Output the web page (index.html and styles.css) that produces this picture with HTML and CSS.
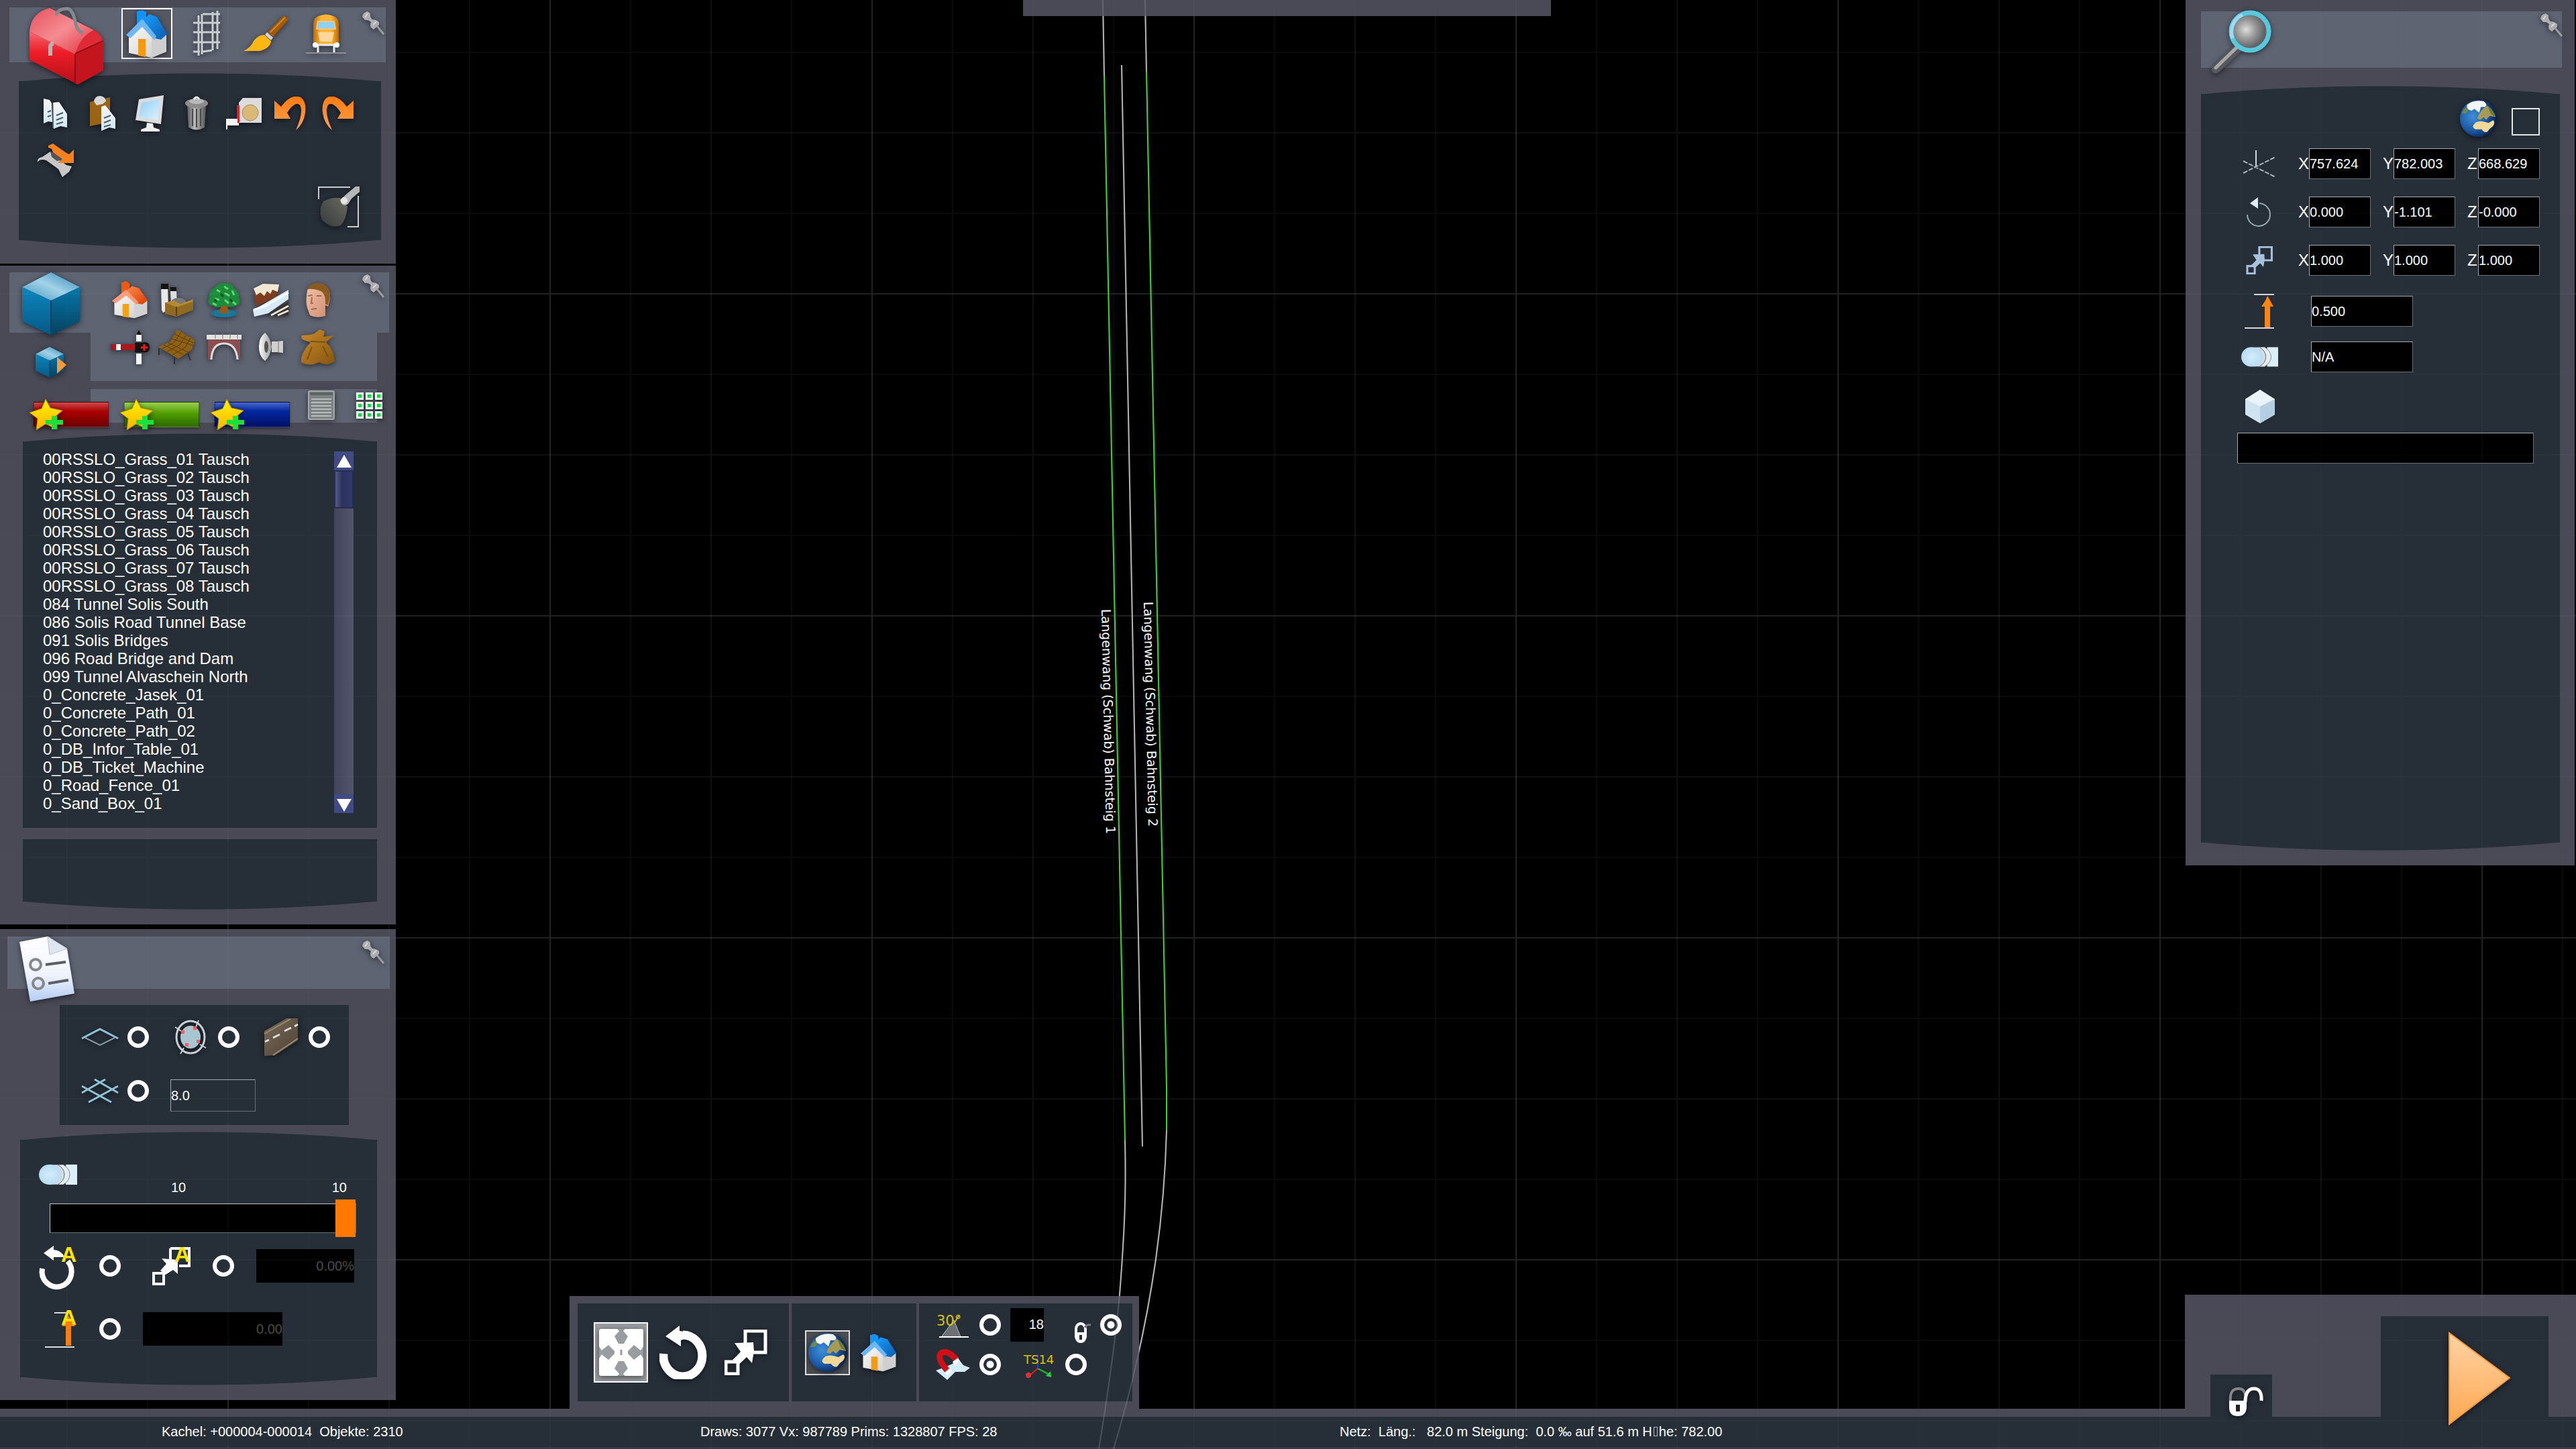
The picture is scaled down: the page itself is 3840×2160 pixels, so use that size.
FILE: index.html
```html
<!DOCTYPE html>
<html lang="de">
<head>
<meta charset="utf-8">
<title>Streckeneditor</title>
<link rel="stylesheet" href="styles.css">
</head>
<body>

<svg class="defs" aria-hidden="true">
  <defs>
    <linearGradient id="g-red" x1="0" y1="0" x2="0" y2="1"><stop offset="0" stop-color="#f26a74"/><stop offset=".4" stop-color="#ee1c27"/><stop offset="1" stop-color="#b5121b"/></linearGradient>
    <linearGradient id="g-lid" x1="0" y1="0" x2="1" y2="1"><stop offset="0" stop-color="#e8505c"/><stop offset=".5" stop-color="#f58c92"/><stop offset="1" stop-color="#e0303c"/></linearGradient>
    <linearGradient id="g-blue-roof" x1="0" y1="0" x2="1" y2="1"><stop offset="0" stop-color="#1aa0ff"/><stop offset="1" stop-color="#0a5bae"/></linearGradient>
    <linearGradient id="g-red-roof" x1="0" y1="0" x2="1" y2="1"><stop offset="0" stop-color="#ff8a50"/><stop offset="1" stop-color="#d83c00"/></linearGradient>
    <linearGradient id="g-wall" x1="0" y1="0" x2="1" y2="1"><stop offset="0" stop-color="#fff"/><stop offset="1" stop-color="#c9c9c9"/></linearGradient>
    <linearGradient id="g-cube-top" x1="0" y1="1" x2="1" y2="0"><stop offset="0" stop-color="#3e94bd"/><stop offset=".5" stop-color="#a3d2e8"/><stop offset="1" stop-color="#2a84b4"/></linearGradient>
    <linearGradient id="g-cube-left" x1="0" y1="0" x2="0" y2="1"><stop offset="0" stop-color="#0b86bd"/><stop offset="1" stop-color="#065a86"/></linearGradient>
    <linearGradient id="g-cube-right" x1="0" y1="0" x2="0" y2="1"><stop offset="0" stop-color="#0777ab"/><stop offset="1" stop-color="#05425f"/></linearGradient>
    <linearGradient id="g-orange" x1="0" y1="0" x2="0" y2="1"><stop offset="0" stop-color="#ff7a10"/><stop offset="1" stop-color="#ffa050"/></linearGradient>
    <linearGradient id="g-play" x1="0" y1="0" x2="0" y2="1"><stop offset="0" stop-color="#ffd3a5"/><stop offset="1" stop-color="#ffa850"/></linearGradient>
    <linearGradient id="g-metal" x1="0" y1="0" x2="1" y2="0"><stop offset="0" stop-color="#555"/><stop offset=".4" stop-color="#bbb"/><stop offset="1" stop-color="#555"/></linearGradient>
    <linearGradient id="g-paper" x1="0" y1="0" x2="0" y2="1"><stop offset="0" stop-color="#f6f6f6"/><stop offset="1" stop-color="#cfe6f5"/></linearGradient>
    <linearGradient id="g-screen" x1="0" y1="0" x2="1" y2="1"><stop offset="0" stop-color="#8ecdf5"/><stop offset="1" stop-color="#dff2fc"/></linearGradient>
    <linearGradient id="g-doc" x1="0" y1="0" x2="0" y2="1"><stop offset="0" stop-color="#fff"/><stop offset=".6" stop-color="#eef3fc"/><stop offset="1" stop-color="#b4ccf5"/></linearGradient>
    <linearGradient id="g-star" x1="0" y1="0" x2="0" y2="1"><stop offset="0" stop-color="#fff200"/><stop offset="1" stop-color="#ffb400"/></linearGradient>
    <linearGradient id="g-train" x1="0" y1="0" x2="1" y2="0"><stop offset="0" stop-color="#b86c00"/><stop offset=".3" stop-color="#ffb53a"/><stop offset=".7" stop-color="#ffb53a"/><stop offset="1" stop-color="#b86c00"/></linearGradient>
    <linearGradient id="g-beam" x1="1" y1="0" x2="0" y2="1"><stop offset="0" stop-color="#6d6c62"/><stop offset="1" stop-color="#33383a"/></linearGradient>
    <linearGradient id="g-sack" x1="0" y1="0" x2="1" y2="1"><stop offset="0" stop-color="#c98a2c"/><stop offset="1" stop-color="#85550e"/></linearGradient>
    <linearGradient id="g-face" x1="0" y1="0" x2="1" y2="1"><stop offset="0" stop-color="#f2c4aa"/><stop offset="1" stop-color="#cf8a70"/></linearGradient>
    <linearGradient id="g-cone" x1="0" y1="0" x2="1" y2="0"><stop offset="0" stop-color="#fff"/><stop offset="1" stop-color="#999"/></linearGradient>
    <linearGradient id="g-road" x1="0" y1="0" x2="1" y2="1"><stop offset="0" stop-color="#7a6b58"/><stop offset="1" stop-color="#4c4236"/></linearGradient>
    <radialGradient id="g-lens" cx=".4" cy=".45"><stop offset="0" stop-color="#dedede"/><stop offset=".5" stop-color="#999"/><stop offset="1" stop-color="#5f6166"/></radialGradient>
    <radialGradient id="g-sea" cx=".35" cy=".45" r=".65"><stop offset="0" stop-color="#3f8fd8"/><stop offset=".6" stop-color="#1b58a4"/><stop offset="1" stop-color="#0a2145"/></radialGradient>
    <radialGradient id="g-capsule"><stop offset="0" stop-color="#d4ecfa"/><stop offset="1" stop-color="#b9dcf2"/></radialGradient>

    <pattern id="grid" x="340" y="438" width="480" height="480" patternUnits="userSpaceOnUse">
      <path d="M120 0V480M360 0V480M0 120H480M0 360H480" stroke="#fff" stroke-opacity=".03" stroke-width="2"/>
      <path d="M240 0V480M0 240H480" stroke="#fff" stroke-opacity=".05" stroke-width="2"/>
      <path d="M0 0V480M0 0H480M480 0V480M0 480H480" stroke="#fff" stroke-opacity=".11" stroke-width="2"/>
    </pattern>

    <g id="terrain">
      <rect width="100%" height="100%" fill="url(#grid)"/>
      <g fill="none" stroke-width="2">
        <path d="M1644 0L1646 113M1707 0L1709 107M1672 97L1703 1709M1677 1700C1679 1780 1676 1840 1669 1930C1662 2005 1652 2075 1638 2160M1739 1685C1737 1760 1731 1820 1723 1877C1711 1960 1690 2060 1660 2160" stroke="#b4b4b4"/>
        <path d="M1646 113L1677 1700M1709 107L1739 1620V1685" stroke="#3bd42a"/>
      </g>
    </g>

    <symbol id="pin" viewBox="0 0 36 36">
      <path d="M1 8Q2 1 9 0L13 3Q12 8 16 12Q22 12 26 16L26 20L18 27L14 24Q12 20 14 16Q10 12 5 13Z" fill="#aeaeb2"/>
      <path d="M23 22L33 34" stroke="#9a9aa0" stroke-width="3"/><path d="M5 9L9 3M17 20L22 15" stroke="#d6d6d8" stroke-width="2"/>
    </symbol>
    <symbol id="house" viewBox="0 0 62 74">
      <path d="M4 38L4 66L38 73L60 64V38L40 16L22 22Z" fill="url(#g-wall)"/>
      <path d="M38 73V44L60 38V64Z" fill="#cfcfcf"/>
      <path d="M17 8L25 4V16L17 24Z" fill="#0a86e8"/><path d="M16 4L24 2L30 5V14L22 26H16Z" fill="#1193f5"/>
      <path d="M24 20L34 8L46 12L61 38L52 46L42 44Z" fill="url(#g-blue-roof)"/>
      <path d="M0 39L24 15L45 41L42 47L24 27L6 44Z" fill="#6db8f4"/>
      <path d="M18 45L29 45V72L18 70Z" fill="#f39a10"/>
    </symbol>
    <symbol id="cube" viewBox="0 0 86 94">
      <path d="M43 0L86 22V73L43 94L0 73V22Z" fill="#054b6e"/>
      <path d="M43 0L86 22L43 42L0 22Z" fill="url(#g-cube-top)"/>
      <path d="M0 22L43 42V93L0 73Z" fill="url(#g-cube-left)"/>
      <path d="M86 22L43 42V93L86 73Z" fill="url(#g-cube-right)"/>
      <path d="M43 42V92" stroke="#033a55" stroke-width="2"/>
    </symbol>
    <symbol id="globe" viewBox="0 0 60 60">
      <circle cx="30" cy="30" r="29" fill="url(#g-sea)"/>
      <path d="M12 9Q22 0 38 3Q46 9 40 12L34 12L31 21L24 15L19 18L12 15Z" fill="#f4f6f4"/>
      <path d="M4 22Q7 13 13 13Q15 20 10 22Z" fill="#6f8a4a"/>
      <path d="M30 25Q36 14 44 10Q54 17 57 28L48 26L42 32L38 28L33 32L28 30Z" fill="#a69a56"/>
      <path d="M44 10Q54 17 57 28L50 24Z" fill="#6d7a3c"/>
      <path d="M22 41Q26 33 38 35L46 37L53 33Q57 36 53 42Q48 45 44 51Q39 53 35 47L25 47Q20 44 22 41Z" fill="#f0d79a"/>
    </symbol>
    <symbol id="capsule" viewBox="0 0 57 30">
      <path d="M40 0H57V30H40Z" fill="#dceef7"/><path d="M26 0H36Q46 6 46 15Q46 24 36 30H26Z" fill="#e4edf0" stroke="#7d8a92"/>
      <path d="M22 0H28Q38 6 38 15Q38 24 28 30H20Z" fill="#d3dce0" stroke="#5f6a72"/>
      <rect x="0" y="0" width="33" height="30" rx="15" fill="url(#g-capsule)"/>
    </symbol>
    <symbol id="resize" viewBox="0 0 64 68">
      <path d="M31 2H61V34H31Z" fill="none" stroke="currentColor" stroke-width="5"/>
      <path d="M2 48H20V66H2Z" fill="none" stroke="currentColor" stroke-width="5"/>
      <path d="M15 20L43 19L44 32L41 50L33 41Q26 48 20 53L12 45Q18 40 24 33Z" fill="currentColor"/>
    </symbol>
    <symbol id="rotate" viewBox="0 0 71 80">
      <path d="M6 42A29 31 0 1 0 35 14" fill="none" stroke="currentColor" stroke-width="13"/>
      <path d="M9 16L30 0V8L37 9V20L32 22V31Z" fill="currentColor"/>
    </symbol>
    <symbol id="undo" viewBox="0 0 50 50">
      <path d="M1 6L11 15Q26 -5 40 1Q49 7 47 24Q45 40 33 50Q42 30 41 19Q40 9 33 11Q26 14 20 24L25 33H1Z" fill="url(#g-orange)"/>
    </symbol>
    <symbol id="star-plus" viewBox="0 0 50 46">
      <path d="M24 0L31 13L49 17L36 28L39 44L24 37L10 46L12 29L0 20L18 14Z" fill="url(#g-star)" stroke="#a88400"/>
      <path d="M33 25H41V31H50V38H41V45H33V38H24V31H33Z" fill="#1fe03a"/>
    </symbol>
  </defs>
</svg>

<svg class="map" role="img" aria-label="Streckenkarte">
  <use href="#terrain"/>
  <g class="map-label">
    <text transform="translate(1642 908) rotate(88.8)">Langenwang (Schwab) Bahnsteig 1</text>
    <text transform="translate(1705 897) rotate(88.8)">Langenwang (Schwab) Bahnsteig 2</text>
  </g>
</svg>

<main class="workspace">
  <aside class="left-column">

    <section class="panel tools">
      <header class="band">
        <button class="toolbox" aria-label="Werkzeuge">
          <svg width="114" height="116" viewBox="0 0 114 116">
            <path d="M2 36L70 70L112 50V94L74 115L2 78Z" fill="#c4141d"/>
            <path d="M2 36L70 70V113L2 78Z" fill="url(#g-red)"/>
            <path d="M2 36Q4 8 32 1L98 34Q80 44 70 70Z" fill="url(#g-lid)"/>
            <path d="M70 70Q78 42 98 34Q108 38 112 52Z" fill="#e02a35"/>
            <path d="M70 70V114M70 69L112 50" stroke="#8e0b12" stroke-width="2"/>
            <path d="M42 12Q44 1 60 2Q68 6 71 26Q74 36 82 38" fill="none" stroke="#85888e" stroke-width="5"/>
            <path d="M33 72V58Q34 54 38 54" fill="none" stroke="#b4b4b4" stroke-width="6"/>
          </svg>
        </button>
        <div class="tabs">
          <button class="tab selected" aria-label="Objekte"><svg width="62" height="74"><use href="#house"/></svg></button>
          <button class="tab" aria-label="Gleise">
            <svg width="44" height="70" viewBox="0 0 44 70"><path d="M10 8V68M15 6V66M31 3V60M38 1V58M2 19H42M2 33H42M2 48H42M16 6H42M2 62H12M16 62L30 60" fill="none" stroke="#c8cdd2" stroke-width="3"/></svg>
          </button>
          <button class="tab" aria-label="Malen">
            <svg width="68" height="56" viewBox="0 0 68 56"><path d="M36 26L60 1L67 7L44 33Z" fill="#a55a00"/><path d="M40 26L62 4" stroke="#d88a20" stroke-width="2"/><path d="M35 26L44 34L41 38L32 30Z" fill="#d0d4d8"/><path d="M31 30L41 39Q40 50 24 54L0 54Q12 48 15 39Q22 30 31 30Z" fill="#fdb714"/></svg>
          </button>
          <button class="tab" aria-label="Szenario">
            <svg width="60" height="60" viewBox="0 0 60 60"><path d="M11 14Q12 5 22 3Q30 0 38 3Q48 5 49 14V42Q48 47 42 47H18Q12 47 11 42Z" fill="url(#g-train)"/><path d="M18 12H42L44 23H16Z" fill="#8ed0f2" stroke="#e9c68c" stroke-width="2"/><path d="M18 28H42L39 42H21Z" fill="#ffd79a"/><path d="M15 44V50M45 44V50M16 47H44M18 47V58M42 47V58" stroke="#e8ecf0" stroke-width="3"/><circle cx="14" cy="47" r="4" fill="#fff"/><circle cx="46" cy="47" r="4" fill="#fff"/><path d="M0 59H60" stroke="#8a8c92" stroke-width="2"/></svg>
          </button>
        </div>
        <button class="pin" aria-label="Anheften"><svg width="36" height="36"><use href="#pin"/></svg></button>
      </header>
      <div class="well round-both tools-well">
        <div class="tool-grid">
          <button aria-label="Kopieren"><svg width="38" height="46" viewBox="0 0 38 46"><path d="M1 1L10 3L13 8L14 36L8 35L1 38Z" fill="url(#g-paper)"/><path d="M15 7L24 6L36 24V44L26 42L16 46Z" fill="url(#g-paper)"/><path d="M15 7V45" stroke="#7f8b94"/><path d="M20 26L30 22M20 33L30 29M20 39L30 36M7 21L12 19M7 28L12 26" stroke="#4c5a66" stroke-width="2"/></svg></button>
          <button aria-label="Einfügen"><svg width="40" height="54" viewBox="0 0 40 54"><path d="M1 10L31 3V40L1 46Z" fill="#9b6414"/><path d="M7 9Q9 0 17 1Q24 2 25 9L20 13L11 15Z" fill="#d8d8d8"/><path d="M18 17L24 15L39 34V50L30 48L18 53Z" fill="url(#g-paper)"/><path d="M22 34L32 30M22 41L32 37M22 47L32 44" stroke="#4c5a66" stroke-width="2"/></svg></button>
          <button aria-label="Ansicht"><svg width="42" height="54" viewBox="0 0 42 54"><path d="M5 6L42 0L38 43L0 37Z" fill="#dcdcdc"/><path d="M9 11L36 6L33 37L5 32Z" fill="url(#g-screen)"/><path d="M17 41L26 42L27 48L36 51V54H8V51L16 48Z" fill="#eee"/></svg></button>
          <button aria-label="Löschen"><svg width="34" height="50" viewBox="0 0 34 50"><path d="M3 14H31L29 46Q17 53 5 46Z" fill="url(#g-metal)"/><path d="M11 18V44M17 18V46M23 18V44" stroke="#4a4a4a" stroke-width="2"/><ellipse cx="17" cy="10" rx="17" ry="7" fill="#8c8c8c"/><ellipse cx="17" cy="7" rx="11" ry="4" fill="#b8b8b8"/><path d="M13 4Q17 -2 21 4" stroke="#eee" stroke-width="3" fill="none"/></svg></button>
          <button aria-label="Messen"><svg width="54" height="48" viewBox="0 0 54 48"><path d="M20 8L26 1H54V38H20Z" fill="#dcdcdc"/><path d="M19 12V37" stroke="#d22" stroke-width="4"/><circle cx="37" cy="23" r="12" fill="#dcb877" stroke="#a89060"/><path d="M20 38H1V48H3V42H20Z" fill="#fff"/><path d="M1 32H18V39H1Z" fill="#f4f4f4"/></svg></button>
          <button aria-label="Rückgängig"><svg width="50" height="50"><use href="#undo"/></svg></button>
          <button aria-label="Wiederherstellen"><svg class="mirror" width="50" height="50"><use href="#undo"/></svg></button>
          <button aria-label="Versetzen"><svg width="56" height="50" viewBox="0 0 56 50"><path d="M1 28Q0 21 8 20L20 12L30 22L44 32L52 34L48 42L38 50L32 38L14 25Q4 22 1 28Z" fill="#c8c8c8"/><path d="M20 12L30 15L42 24L30 26L22 20Z" fill="#555"/><path d="M17 3L24 0L44 14L48 16L55 9V29H31L38 23L24 13L22 8L17 6Z" fill="#f5811c"/></svg></button>
        </div>
        <button class="lamp" aria-label="Beleuchtung"><svg width="62" height="62" viewBox="0 0 62 62"><path d="M1 19V1H48M60 14V60H44" fill="none" stroke="#c8cacc" stroke-width="2"/><path d="M33 17L44 30Q42 50 34 58Q20 64 6 50Q0 34 8 22Q20 16 33 17Z" fill="url(#g-beam)"/><path d="M44 10L56 0H62V8L50 18L45 26Q36 32 33 20Z" fill="#b4b6b8"/><circle cx="39" cy="21" r="5" fill="#e6e6e6"/></svg></button>
      </div>
    </section>

    <section class="panel browser">
      <header class="catalog">
        <div class="catalog-kind">
          <button aria-label="Alle Objekte"><svg width="86" height="94"><use href="#cube"/></svg></button>
          <button aria-label="Objektfilter"><svg width="46" height="46" viewBox="0 0 46 46"><use href="#cube" width="42" height="46"/><path d="M32 15L46 27L32 40Z" fill="#f79a3c"/></svg></button>
        </div>
        <div class="catalog-grid">
          <button aria-label="Gebäude"><svg width="54" height="56" viewBox="0 0 62 74" preserveAspectRatio="none"><path d="M4 38V66L38 73L60 64V38L40 16L22 22Z" fill="url(#g-wall)"/><path d="M38 73V44L60 38V64Z" fill="#d2d2d2"/><path d="M16 3L24 0L30 5V14L22 26H16Z" fill="#ef5a10"/><path d="M24 20L34 10L46 14L61 38L52 46L42 44Z" fill="url(#g-red-roof)"/><path d="M0 39L24 17L45 41L42 47L24 28L6 44Z" fill="#ff9a74"/><path d="M18 45L29 45V72L18 70Z" fill="#f9a210"/></svg></button>
          <button aria-label="Industrie"><svg width="50" height="50" viewBox="0 0 50 50"><path d="M1 3H11L12 40L4 44L2 40Z" fill="#e8e8e8"/><path d="M1 1H12V9H1ZM15 6H24V13H15Z" fill="#141414"/><path d="M15 12H24L25 30H16Z" fill="#ddd"/><path d="M17 25Q28 18 38 26V34H17Z" fill="#777"/><path d="M7 29L24 33L49 25V40L24 50L7 46Z" fill="#8f6a20"/><path d="M7 29L20 26L30 31L49 24L48 28L24 36Z" fill="#b28a38"/><path d="M24 35V49" stroke="#5a4010" stroke-width="2"/></svg></button>
          <button aria-label="Vegetation"><svg width="50" height="54" viewBox="0 0 50 54"><ellipse cx="25" cy="47" rx="19" ry="6" fill="#1379a0"/><path d="M21 32H29L32 47H18Z" fill="#9a5a14"/><path d="M12 8Q18 0 26 2Q36 1 40 10Q48 14 47 24Q52 34 42 36Q34 40 26 35Q16 41 9 36Q-2 34 3 24Q2 13 12 8Z" fill="#1d8a3c"/><path d="M14 12l5 3m6-8l6 4m-20 14l7 2m8-10l7 4m4-8l3 7m-32 12l6 3m12-8l6 5m6-2l5 4" stroke="#5dd66c" stroke-width="3"/><path d="M20 18l4 4m10 4l3 4m-26-4l3 4" stroke="#0a5520" stroke-width="3"/></svg></button>
          <button aria-label="Gleisbett"><svg width="56" height="50" viewBox="0 0 56 50"><path d="M3 14L38 10L36 20L8 34Q2 28 3 14Z" fill="#7d3d1e"/><path d="M2 8L16 1L40 2L38 13L30 10L27 16L22 12L18 19L12 14L6 18Z" fill="#f2e8d2"/><path d="M1 40L14 33L54 10V24L24 45L3 50Z" fill="#d6eaf8"/><path d="M2 40L20 34L54 14" stroke="#fff" stroke-width="3" fill="none"/><path d="M22 48L54 28V48L40 49Z" fill="#3a322a"/><path d="M28 48L54 34M38 48L54 41" stroke="#e8e4dc" stroke-width="3"/></svg></button>
          <button aria-label="Personen"><svg width="40" height="52" viewBox="0 0 40 52"><path d="M4 12Q8 2 20 1Q36 3 38 18Q38 28 35 36L31 34V50Q18 54 8 49L4 38Q1 30 4 12Z" fill="url(#g-face)"/><path d="M4 10Q10 0 22 1Q38 4 38 20L35 34L31 32Q32 20 26 14Q16 9 4 10Z" fill="#8a5a1e"/><path d="M5 20L12 19M18 20L25 20M11 22L10 31H13M10 40L18 39" stroke="#a8674c" stroke-width="2" fill="none"/></svg></button>
          <button aria-label="Signale"><svg width="58" height="52" viewBox="0 0 58 52"><path d="M0 22H44V31H0Z" fill="#a8181c"/><path d="M8 22H15V31H8Z" fill="#fff"/><path d="M38 8L42 0L46 8V18H38ZM38 36H46V52H38Z" fill="#f4f4f4"/><path d="M38 8L42 0L46 8Z" fill="#111"/><path d="M36 20H47Q58 17 58 27Q58 36 47 34H36Z" fill="#111"/><path d="M50 22V32M45 27H55" stroke="#f01818" stroke-width="3"/></svg></button>
          <button aria-label="Ausstattung"><svg width="56" height="52" viewBox="0 0 56 52"><path d="M0 26L18 18L28 0L54 16L50 30L30 44Z" fill="#8e6114"/><path d="M6 29L24 19L34 4M13 33L32 23L41 9M21 38L40 27L48 13M8 23L38 38M15 20L44 34M20 14L52 24M24 7L52 20" stroke="#5c3c0c" stroke-width="1" fill="none"/><path d="M1 28V38M24 42V52M44 36L48 46" stroke="#2c3036" stroke-width="2"/></svg></button>
          <button aria-label="Brücken"><svg width="52" height="42" viewBox="0 0 52 42"><path d="M2 6H50V40H45Q42 16 26 16Q10 16 7 40H2Z" fill="#8a4e50"/><path d="M7 40Q8 16 26 16Q44 16 46 40" fill="none" stroke="#ddd" stroke-width="3"/><path d="M0 3H52V10H0Z" fill="#e2e2e2"/><path d="M13 0V9M24 0V9M35 0V9M46 0V9" stroke="#777"/></svg></button>
          <button aria-label="Geräusche"><svg width="38" height="44" viewBox="0 0 38 44"><path d="M20 14H28L37 13V31L28 30H20Z" fill="#cfcfcf"/><path d="M30 13V31" stroke="#777"/><path d="M10 1Q18 8 20 22Q18 36 10 43Q1 36 1 22Q1 8 10 1Z" fill="url(#g-cone)"/><ellipse cx="12" cy="22" rx="3" ry="9" fill="#555"/></svg></button>
          <button aria-label="Sonstiges"><svg width="52" height="54" viewBox="0 0 52 54"><path d="M15 20Q-2 17 2 10L14 9Q22 8 28 1L36 4L34 12L50 10L38 20Q50 32 51 48Q40 57 28 50Q14 57 1 50Q-1 38 15 20Z" fill="url(#g-sack)"/><path d="M15 19L37 20M17 27L10 46M33 26L41 42" stroke="#7d500f" stroke-width="2"/></svg></button>
        </div>
        <button class="pin" aria-label="Anheften"><svg width="36" height="36"><use href="#pin"/></svg></button>
      </header>
      <div class="favourites">
        <button class="favourite red" aria-label="Rote Favoriten"><svg width="50" height="46"><use href="#star-plus"/></svg></button>
        <button class="favourite green" aria-label="Grüne Favoriten"><svg width="50" height="46"><use href="#star-plus"/></svg></button>
        <button class="favourite blue" aria-label="Blaue Favoriten"><svg width="50" height="46"><use href="#star-plus"/></svg></button>
        <button class="view-list" aria-label="Listenansicht"><svg width="40" height="44" viewBox="0 0 40 44"><rect x="1" y="1" width="38" height="42" rx="2" fill="#7d8282" stroke="#a4a8a8" stroke-width="2"/><path d="M3 5H37" stroke="#5e6464" stroke-width="4"/><path d="M5 13H35M5 18H35M5 23H35M5 28H35M5 33H35M5 38H35" stroke="#b8bcbc" stroke-width="2"/></svg></button>
        <button class="view-tiles" aria-label="Kachelansicht"><svg width="40" height="40" viewBox="0 0 40 40"><path d="M0 0H11V11H0ZM14 0H25V11H14ZM28 0H39V11H28ZM0 14H11V25H0ZM14 14H25V25H14ZM28 14H39V25H28ZM0 28H11V39H0ZM14 28H25V39H14ZM28 28H39V39H28Z" fill="#f4fff4"/><path d="M3 3H8V8H3ZM17 3H22V8H17ZM31 3H36V8H31ZM3 17H8V22H3ZM17 17H22V22H17ZM31 17H36V22H31ZM3 31H8V36H3ZM17 31H22V36H17ZM31 31H36V36H31Z" fill="#14d83c"/></svg></button>
      </div>
      <div class="well round-top list-well">
        <ul class="object-list">
          <li>00RSSLO_Grass_01 Tausch</li>
          <li>00RSSLO_Grass_02 Tausch</li>
          <li>00RSSLO_Grass_03 Tausch</li>
          <li>00RSSLO_Grass_04 Tausch</li>
          <li>00RSSLO_Grass_05 Tausch</li>
          <li>00RSSLO_Grass_06 Tausch</li>
          <li>00RSSLO_Grass_07 Tausch</li>
          <li>00RSSLO_Grass_08 Tausch</li>
          <li>084 Tunnel Solis South</li>
          <li>086 Solis Road Tunnel Base</li>
          <li>091 Solis Bridges</li>
          <li>096 Road Bridge and Dam</li>
          <li>099 Tunnel Alvaschein North</li>
          <li>0_Concrete_Jasek_01</li>
          <li>0_Concrete_Path_01</li>
          <li>0_Concrete_Path_02</li>
          <li>0_DB_Infor_Table_01</li>
          <li>0_DB_Ticket_Machine</li>
          <li>0_Road_Fence_01</li>
          <li>0_Sand_Box_01</li>
        </ul>
        <div class="scrollbar">
          <button class="scroll-step" aria-label="Nach oben"><svg width="30" height="28"><path d="M15 5L26 24H4Z" fill="#fff"/></svg></button>
          <div class="scroll-track"><div class="scroll-thumb"></div></div>
          <button class="scroll-step" aria-label="Nach unten"><svg width="30" height="28"><path d="M15 26L4 7H26Z" fill="#fff"/></svg></button>
        </div>
      </div>
      <div class="well round-bottom preview-well"></div>
    </section>

    <section class="panel options">
      <header class="band">
        <button class="document" aria-label="Optionen"><svg width="84" height="98" viewBox="0 0 84 98"><path d="M1 8L43 0L72 18L83 85L17 97Z" fill="url(#g-doc)"/><path d="M43 0L46 27L72 18Z" fill="#dfe6f2" stroke="#b4bfd4"/><circle cx="25" cy="42" r="8" fill="none" stroke="#85878c" stroke-width="4"/><circle cx="29" cy="70" r="8" fill="none" stroke="#85878c" stroke-width="4"/><path d="M40 42L70 38M44 70L74 65" stroke="#5c5f66" stroke-width="4"/></svg></button>
        <button class="pin" aria-label="Anheften"><svg width="36" height="36"><use href="#pin"/></svg></button>
      </header>
      <div class="well snap-well">
        <label class="choice"><svg width="56" height="28" viewBox="0 0 56 28"><path d="M1 16L28 2L55 16" fill="none" stroke="#8fc3d6" stroke-width="3"/><path d="M6 15L28 26L50 15" fill="none" stroke="#8a9aa2" stroke-width="2"/></svg><input type="radio" name="snap-tile" aria-label="Kachel"></label>
        <label class="choice"><svg width="48" height="54" viewBox="0 0 48 54"><ellipse cx="24" cy="27" rx="21" ry="24" fill="none" stroke="#c6d0d4" stroke-width="3"/><ellipse cx="24" cy="27" rx="15" ry="17" fill="#a9c6d0"/><path d="M1 12L10 18M38 38L47 43M36 2L32 12M9 52L14 43" stroke="#c6d0d4" stroke-width="2"/><path d="M10 17H15V22H10ZM28 11H33V16H28ZM16 36H21V41H16ZM33 31H38V36H33Z" fill="#e8606c"/></svg><input type="radio" name="snap-sphere" aria-label="Umkreis"></label>
        <label class="choice"><svg width="52" height="58" viewBox="0 0 52 58"><path d="M1 20L34 1H51V34L17 56L1 57Z" fill="url(#g-road)"/><path d="M1 24L40 2M14 56L51 31" stroke="#9c8a72" stroke-width="2"/><path d="M2 36L8 33M14 30L24 25M31 20L41 15M46 13L51 10" stroke="#ddd" stroke-width="3"/></svg><input type="radio" name="snap-road" aria-label="Straße"></label>
        <label class="choice"><svg width="56" height="38" viewBox="0 0 56 38"><path d="M1 22L36 2M20 2L55 22M1 12L45 36M55 12L11 36" fill="none" stroke="#8fc3d6" stroke-width="3"/></svg><input type="radio" name="snap-grid" aria-label="Raster"></label>
        <input class="field snap-size" type="text" value="8.0" aria-label="Rastergröße">
      </div>
      <div class="well round-both random-well">
        <div class="slider-head">
          <svg width="57" height="30"><use href="#capsule"/></svg>
          <output class="slider-mid">10</output>
          <output>10</output>
        </div>
        <input class="slider" type="range" min="0" max="10" value="10" aria-label="Sichtweite">
        <div class="random-row">
          <svg width="57" height="60" viewBox="0 0 57 60"><path d="M5 30A22 23 0 1 0 43 19" transform="translate(0 4)" fill="none" stroke="#fff" stroke-width="8"/><path d="M7 11L22 0V6Q34 7 38 17H22V22Z" fill="#fff"/><text class="auto-mark" x="33" y="24">A</text></svg>
          <input type="radio" name="auto-rotate" aria-label="Zufällige Drehung">
          <svg class="apart" width="57" height="60" viewBox="0 0 57 60"><path d="M27 4H55V30H40M27 4V20M2 41H17V57H2Z" fill="none" stroke="#fff" stroke-width="4"/><path d="M14 19L38 21V42L31 36L20 43L12 37L21 27Z" fill="#fff"/><text class="auto-mark" x="33" y="24">A</text></svg>
          <input type="radio" name="auto-scale" aria-label="Zufällige Größe">
          <input class="field dim scale-value" type="text" value="0.00%" aria-label="Größenabweichung">
        </div>
        <div class="random-row last">
          <svg width="57" height="60" viewBox="0 0 57 60"><path d="M23 6H44M9 57H53" stroke="#d8dadc" stroke-width="2"/><path d="M44 10L54 26H48V55H40V26H34Z" fill="#ff7d0a"/><text class="auto-mark" x="33" y="24">A</text></svg>
          <input type="radio" name="auto-height" aria-label="Zufällige Höhe">
          <input class="field dim height-value" type="text" value="0.00" aria-label="Höhenabweichung">
        </div>
      </div>
    </section>
  </aside>

  <div class="middle-column">
    <div class="top-tab"></div>
    <div class="toolbar" role="toolbar">
      <div class="segment modes">
        <button class="mode selected" aria-label="Verschieben"><svg width="66" height="70" viewBox="0 0 66 70"><path d="M3 0H63Q66 0 66 3V67Q66 70 63 70H3Q0 70 0 67V3Q0 0 3 0Z" fill="#fff"/><path d="M33 0L43 11L37 22H29L23 11ZM33 70L43 59L37 48H29L23 59ZM0 35L14 24L23 33V37L14 46ZM66 35L52 24L43 33V37L52 46Z" fill="#999ca1"/><path d="M27 0H39L33 6ZM27 70H39L33 64ZM0 26V44L6 35ZM66 26V44L60 35Z" fill="#999ca1"/><path d="M33 31V39" stroke="#999ca1" stroke-width="3"/></svg></button>
        <button class="mode" aria-label="Drehen"><svg width="71" height="80"><use href="#rotate"/></svg></button>
        <button class="mode" aria-label="Skalieren"><svg width="64" height="68"><use href="#resize"/></svg></button>
      </div>
      <div class="segment spaces">
        <button class="space selected" aria-label="Welt"><svg width="60" height="60"><use href="#globe"/></svg></button>
        <button class="space" aria-label="Lokal"><svg width="54" height="58" viewBox="0 0 62 74" preserveAspectRatio="none"><use href="#house" width="62" height="74"/></svg></button>
      </div>
      <div class="segment settings">
        <div class="setting-row">
          <svg width="52" height="44" viewBox="0 0 52 44"><path d="M9 40L28 15L38 40Z" fill="#6d7074" stroke="#b8babc"/><path d="M28 20L36 7" stroke="#c8b400" stroke-width="2"/><path d="M6 40H50" stroke="#fff" stroke-width="2"/><text class="angle-mark" x="2" y="23">30°</text></svg>
          <input type="radio" name="angle-snap" aria-label="Winkelraster">
          <input class="field plain angle-value" type="text" value="18" aria-label="Winkel">
          <svg width="56" height="56" viewBox="0 0 56 56"><path d="M34 40V34A7 8 0 0 1 48 34V40" fill="none" stroke="#fff" stroke-width="4"/><path d="M32 39H50V46Q48 55 41 55Q34 55 32 46Z" fill="#fff"/><path d="M41 43V50" stroke="#262e38" stroke-width="4"/><path d="M47 32Q50 27 56 28" fill="none" stroke="#777b80" stroke-width="3"/></svg>
          <input type="radio" name="lock-axis" aria-label="Achse sperren" checked>
        </div>
        <div class="setting-row">
          <svg width="52" height="46" viewBox="0 0 52 46"><path d="M1 32L12 28L26 22L34 14L42 24L52 28L44 34L30 34L18 46Z" fill="#d4ecf8"/><path d="M18 32Q3 15 8 7Q17 -1 32 16" fill="none" stroke="#d01018" stroke-width="9"/><path d="M14 35L22 28L25 34L18 39ZM26 19L34 13L37 18L29 24Z" fill="#fff"/></svg>
          <input type="radio" name="magnet" aria-label="Einrasten" checked>
          <svg width="68" height="46" viewBox="0 0 68 46"><path d="M41 29L29 39" stroke="#e02020" stroke-width="2"/><path d="M41 29L58 38" stroke="#18c030" stroke-width="2"/><path d="M41 29V8" stroke="#3038e0" stroke-width="2"/><circle cx="27" cy="39" r="4" fill="#e03030"/><path d="M61 42L53 40L60 33Z" fill="#20d838"/><text class="axis-mark" x="20" y="22">TS14</text></svg>
          <input type="radio" name="ts-axis" aria-label="TS14-Achsen">
        </div>
      </div>
    </div>
  </div>

  <aside class="right-column">
    <section class="panel inspector">
      <header class="band">
        <button class="magnifier" aria-label="Eigenschaften"><svg width="92" height="94" viewBox="0 0 92 94"><path d="M6 86L40 54" stroke="#55585c" stroke-width="13" stroke-linecap="round"/><path d="M6 84L38 53" stroke="#a8a8a8" stroke-width="5" stroke-linecap="round"/><circle cx="57" cy="30" r="28" fill="url(#g-lens)" stroke="#58c8dc" stroke-width="7"/><path d="M31 40A28 28 0 0 1 46 5" fill="none" stroke="#a0d8f4" stroke-width="5"/></svg></button>
        <button class="pin" aria-label="Anheften"><svg width="36" height="36"><use href="#pin"/></svg></button>
      </header>
      <form class="well round-both properties">
        <div class="world-row">
          <svg width="57" height="57"><use href="#globe"/></svg>
          <input type="checkbox" aria-label="Weltkoordinaten">
        </div>
        <div class="property">
          <svg width="50" height="42" viewBox="0 0 50 42"><path d="M20 1V25" stroke="#ccd8e0" stroke-width="2"/><path d="M1 17L49 41M1 35L49 11" fill="none" stroke="#a9b6be" stroke-width="2" stroke-dasharray="7 2"/></svg>
          <div class="axes">
            <label for="px">X</label><input class="field" id="px" type="text" value="757.624">
            <label for="py">Y</label><input class="field" id="py" type="text" value="782.003">
            <label for="pz">Z</label><input class="field" id="pz" type="text" value="668.629">
          </div>
        </div>
        <div class="property">
          <svg width="38" height="44" viewBox="0 0 38 44"><path d="M1 26A17 17 0 1 0 19 9" fill="none" stroke="#97a7b2" stroke-width="2"/><path d="M5 9L17 0V17Z" fill="#dcebf5"/></svg>
          <div class="axes">
            <label for="rx">X</label><input class="field" id="rx" type="text" value="0.000">
            <label for="ry">Y</label><input class="field" id="ry" type="text" value="-1.101">
            <label for="rz">Z</label><input class="field" id="rz" type="text" value="-0.000">
          </div>
        </div>
        <div class="property">
          <svg class="pale" width="43" height="42"><use href="#resize"/></svg>
          <div class="axes">
            <label for="sx">X</label><input class="field" id="sx" type="text" value="1.000">
            <label for="sy">Y</label><input class="field" id="sy" type="text" value="1.000">
            <label for="sz">Z</label><input class="field" id="sz" type="text" value="1.000">
          </div>
        </div>
        <div class="property">
          <svg width="44" height="54" viewBox="0 0 44 54"><path d="M14 2H44M0 52H44" stroke="#d4d6d8" stroke-width="2"/><path d="M34 4L38 11L43 20H38V51H30V20H25L31 11Z" fill="#ff8410"/></svg>
          <input class="field single" type="text" value="0.500" aria-label="Höhe">
        </div>
        <div class="property">
          <svg width="55" height="30"><use href="#capsule"/></svg>
          <input class="field single" type="text" value="N/A" aria-label="Sichtweite">
        </div>
        <div class="object-name">
          <svg width="68" height="50" viewBox="-12 0 68 50"><path d="M22 0L44 14V37L22 50L0 37V14Z" fill="#cfe4f0"/><path d="M22 0L44 14L22 25L0 14Z" fill="#e9f3fa"/><path d="M22 25L44 14V37L22 50Z" fill="#b4cfe2"/></svg>
          <input class="field" type="text" value="" aria-label="Objektname">
        </div>
      </form>
    </section>

    <div class="dock">
      <button class="lock-button" aria-label="Sperre"><svg width="52" height="46" viewBox="0 0 52 46"><path d="M3 24Q1 4 15 4Q24 4 25 14" fill="none" stroke="#85878a" stroke-width="4"/><path d="M1 22H27V32Q26 45 14 45Q1 45 1 32Z" fill="#fff"/><path d="M11 28H17V38H11Z" fill="#222"/><path d="M25 24Q25 4 38 4Q50 4 49 22" fill="none" stroke="#fff" stroke-width="5"/></svg></button>
      <button class="play-button" aria-label="Starten"><svg width="92" height="138" viewBox="0 0 92 138"><path d="M1 1L91 68L1 137Z" fill="url(#g-play)" stroke="#f59a3c" stroke-width="2"/></svg></button>
    </div>
  </aside>
</main>

<footer class="status">
  <span>Kachel: +000004-000014  Objekte: 2310</span>
  <span>Draws: 3077 Vx: 987789 Prims: 1328807 FPS: 28</span>
  <span>Netz:  Läng.:   82.0 m Steigung:  0.0 ‰ auf 51.6 m H<i class="missing-glyph"></i>he: 782.00</span>
</footer>

<svg class="map map-glow" aria-hidden="true"><use href="#terrain"/></svg>

</body>
</html>
```
FILE: styles.css
```css
:root {
  --frame: #494a56;
  --band: #5f6473;
  --well: #262e38;
  --line: #a4a8ae;
}

* { box-sizing: border-box; }

body {
  margin: 0;
  min-height: 100vh;
  display: grid;
  grid-template-rows: 1fr auto;
  position: relative;
  overflow: hidden;
  background: #000;
  color: #fff;
  font: 20px/24px "Liberation Sans", Arial, sans-serif;
}

svg { display: block; flex: none; overflow: visible; }

button {
  display: flex;
  align-items: center;
  justify-content: center;
  margin: 0;
  padding: 0;
  border: 0;
  background: none;
  color: #fff;
}

button svg, .choice svg, .world-row svg { filter: drop-shadow(0 2px 4px rgba(0, 0, 0, .55)); }

.defs { position: absolute; width: 0; height: 0; }

/* Track map behind the panels, with a faint copy shining through them */
.map { position: absolute; inset: 0; width: 100%; height: 100%; }
.map-glow { z-index: 5; opacity: .25; pointer-events: none; }
.map-label { fill: #fff; font: 19px "DejaVu Sans", sans-serif; }

.workspace { position: relative; display: flex; z-index: 2; }
.left-column { flex: none; width: 590px; display: flex; flex-direction: column; }
.middle-column { flex: 1; display: flex; flex-direction: column; justify-content: space-between; align-items: center; }
.right-column { flex: none; width: 583px; display: flex; flex-direction: column; justify-content: space-between; }

.panel { background: var(--frame); }
.band { display: flex; align-items: flex-start; position: relative; z-index: 1; background: var(--band); }
.pin { margin-left: auto; }

/* Dark inset areas; the bowed edges are slices of wide ellipses */
.well { background: var(--well); }
.round-both {
  background:
    radial-gradient(100% 90px at 50% 90px, var(--well) 99%, transparent) 50% 0 / 100% 12px no-repeat,
    radial-gradient(100% 90px at 50% -78px, var(--well) 99%, transparent) 50% 100% / 100% 12px no-repeat,
    linear-gradient(var(--well), var(--well)) 0 12px / 100% calc(100% - 24px) no-repeat;
}
.round-top {
  background:
    radial-gradient(100% 90px at 50% 90px, var(--well) 99%, transparent) 50% 0 / 100% 12px no-repeat,
    linear-gradient(var(--well), var(--well)) 0 12px / 100% calc(100% - 12px) no-repeat;
}
.round-bottom {
  background:
    radial-gradient(100% 90px at 50% -78px, var(--well) 99%, transparent) 50% 100% / 100% 12px no-repeat,
    linear-gradient(var(--well), var(--well)) 0 0 / 100% calc(100% - 12px) no-repeat;
}

/* Form controls */
.field {
  width: 92px;
  height: 46px;
  margin: 0;
  padding: 0;
  border: 1px solid;
  border-color: var(--line) #6b6e74 #6b6e74 var(--line);
  border-radius: 0;
  background: #000;
  color: #fff;
  font: inherit;
}
.field.dim, .field.plain { height: 50px; border: 0; text-align: right; }
.field.dim { color: #4c4c4c; }

input[type="radio"] {
  appearance: none;
  flex: none;
  width: 32px;
  height: 32px;
  margin: 0;
  border: 6px solid #fff;
  border-radius: 50%;
}
input[type="radio"]:checked { background: radial-gradient(circle, #fff 5px, transparent 6px); }

input[type="checkbox"] {
  appearance: none;
  width: 42px;
  height: 41px;
  margin: 0;
  border: 2px solid #e4e6e8;
}

/* Tools panel */
.tools { padding: 11px 0 23px; }
.tools .band { height: 82px; margin: 0 15px 0 14px; padding-left: 28px; }
.tabs { display: flex; gap: 13px; margin: 1px 0 0 25px; }
.tab { width: 76px; height: 76px; }
.tab.selected { border: 2px solid #fff; background: #555763; }
.tools .pin { margin-top: 6px; }
.tools-well { margin: 16px 22px 0 28px; padding: 25px 32px 30px 20px; }
.tool-grid { display: grid; grid-template-columns: repeat(7, 70px); grid-auto-rows: 70px; }
.mirror { transform: scaleX(-1); }
.lamp { margin: 4px 0 0 auto; }

/* Object browser */
.browser { margin-top: 3px; padding: 10px 0 22px; }
.catalog {
  display: flex;
  align-items: flex-start;
  height: 162px;
  margin: 0 10px 0 14px;
  background:
    linear-gradient(var(--band), var(--band)) 0 0 / 100% 90px no-repeat,
    linear-gradient(var(--band), var(--band)) 121px 90px / calc(100% - 139px) 72px no-repeat;
}
.catalog-kind { display: flex; flex-direction: column; align-items: center; gap: 17px; width: 124px; }
.catalog-grid { display: grid; grid-template-columns: repeat(5, 70px); grid-auto-rows: 70px; margin: 6px 0 0 21px; }
.catalog .pin { margin: 3px 5px 0 auto; }
.favourites {
  display: flex;
  align-items: flex-start;
  height: 50px;
  margin: 12px 18px 0 14px;
  padding-left: 36px;
  background: linear-gradient(var(--band), var(--band)) 121px 0 / 427px 50px no-repeat;
}
.favourite { width: 112px; height: 38px; margin: 19px 23px 0 0; justify-content: flex-start; border: 1px solid rgba(0, 0, 0, .35); box-shadow: 0 2px 4px rgba(0, 0, 0, .4); }
.favourite svg { margin-left: -7px; }
.favourite.red { background: linear-gradient(#d04a4c, #ac0204 35%, #6d0000); }
.favourite.green { background: linear-gradient(#9ccf50, #4f9e02 45%, #2f6a00); }
.favourite.blue { background: linear-gradient(#4a68cc, #0428a0 35%, #001068); }
.view-list { margin: 2px 0 0 4px; }
.view-tiles { margin: 5px 0 0 32px; }
.list-well { display: flex; justify-content: space-between; height: 588px; margin: 16px 28px 0 34px; padding: 25px 35px 22px 30px; }
.object-list { margin: 0; padding: 0; list-style: none; font-size: 24px; line-height: 27px; white-space: nowrap; }
.scrollbar { display: flex; flex-direction: column; width: 29px; margin-top: 2px; }
.scroll-step { height: 28px; background: #414a84; }
.scroll-step svg { filter: none; }
.scroll-track { flex: 1; background: linear-gradient(90deg, #43465a, #52546a); }
.scroll-thumb { height: 57px; border: 2px solid #262c54; background: linear-gradient(90deg, #565c80, #2b3160 40%, #343a68); }
.preview-well { height: 105px; margin: 17px 28px 0 34px; }

/* Placement options */
.options { margin-top: 7px; padding: 11px 0 22px; }
.options .band { height: 78px; margin: 0 9px 0 11px; padding-left: 17px; }
.options .pin { margin: 6px 6px 0 auto; }
.snap-well { display: grid; grid-template-columns: repeat(3, 135px); grid-template-rows: 80px 80px; height: 179px; margin: 24px 70px 0 89px; padding: 8px 0 0 30px; }
.choice { display: grid; grid-template-columns: 60px 32px; column-gap: 11px; align-items: center; justify-items: center; }
.field.snap-size { align-self: end; width: 127px; height: 48px; margin-bottom: 9px; background: none; }
.random-well { height: 378px; margin: 10px 28px 0 30px; padding: 49px 0 0 28px; }
.slider-head { display: flex; height: 46px; padding-right: 45px; }
.slider-head output { align-self: flex-end; margin-left: auto; }
.slider-head .slider-mid { margin-left: 140px; }
.slider { appearance: none; display: block; width: 457px; height: 56px; margin: 6px 0 0 16px; background: none; }
.slider::-webkit-slider-runnable-track { height: 44px; border: 1px solid; border-color: #c4c6c8 #6b6e74 #6b6e74 #c4c6c8; background: #000; }
.slider::-webkit-slider-thumb { appearance: none; width: 30px; height: 56px; margin-top: -7px; border-radius: 0; background: #ff7800; }
.random-row { display: flex; align-items: center; height: 60px; margin-top: 13px; gap: 33px; }
.random-row.last { margin-top: 34px; }
.random-row .apart { margin-left: 14px; }
.field.scale-value { width: 146px; }
.field.height-value { width: 208px; }
.auto-mark { fill: #ffe400; font: bold 32px "Liberation Sans", Arial, sans-serif; }

/* Middle column */
.top-tab { width: 787px; height: 24px; margin-right: 10px; background: var(--frame); }
.toolbar { display: flex; gap: 4px; align-self: flex-start; width: 849px; height: 168px; margin-left: 259px; padding: 11px 10px 11px 12px; background: var(--frame); }
.segment { background: var(--well); }
.modes { display: flex; align-items: center; gap: 12px; width: 315px; padding-left: 24px; }
.mode { width: 81px; height: 90px; }
.mode.selected { border: 2px solid #fff; background: #999ca1; }
.spaces { display: flex; align-items: center; gap: 9px; width: 186px; padding-left: 20px; }
.space { width: 67px; height: 67px; }
.space.selected { border: 2px solid #dcdee0; background: #4b4d54; }
.settings { flex: 1; padding: 2px 0 0 24px; }
.setting-row { display: flex; align-items: center; gap: 14px; height: 59px; }
.field.angle-value { width: 50px; }
.angle-mark { fill: #d8c400; font: 21px "DejaVu Sans", sans-serif; }
.axis-mark { fill: #d8c400; font: 18px "DejaVu Sans", sans-serif; }

/* Inspector */
.inspector { margin: 0 2px 0 1px; padding: 17px 0 22px; }
.inspector .band { height: 84px; margin: 0 19px 0 23px; padding-left: 16px; }
.inspector .pin { margin: 3px -3px 0 auto; }
.properties { display: flex; flex-direction: column; gap: 26px; height: 1140px; margin: 27px 22px 0 23px; padding: 20px 0 0 54px; }
.world-row { display: flex; align-items: flex-end; justify-content: flex-end; gap: 21px; height: 57px; margin: 0 30px -10px 0; }
.world-row input { margin-bottom: 3px; }
.property { display: grid; grid-template-columns: 66px 1fr; column-gap: 25px; align-items: center; height: 46px; }
.property > svg { justify-self: center; }
.axes { display: grid; grid-template-columns: repeat(3, 16px 92px 18px); align-items: center; }
.axes label { font-size: 24px; }
.axes label:nth-of-type(2) { grid-column: 4; }
.axes label:nth-of-type(3) { grid-column: 7; }
.field.single { width: 152px; margin-left: 19px; }
.pale { color: #a8c0dc; }
.object-name .field { display: block; width: 442px; margin-top: 14px; }

.dock { display: flex; align-items: flex-end; justify-content: space-between; height: 182px; margin-bottom: -12px; padding: 0 41px 0 38px; background: var(--frame); }
.lock-button { align-items: flex-end; justify-content: flex-start; width: 92px; height: 63px; padding-left: 27px; background: var(--well); }
.play-button { align-items: flex-start; justify-content: flex-start; width: 250px; height: 150px; padding: 24px 0 0 101px; background: var(--well); }

/* Status line */
.status {
  position: relative;
  z-index: 1;
  display: grid;
  grid-template-columns: 803px 953px 1fr;
  height: 60px;
  padding: 10px 0 0 241px;
  border-top: 12px solid var(--frame);
  border-bottom: 3px solid #343a48;
  background: var(--well);
  white-space: pre;
}
.missing-glyph { display: inline-block; width: 6px; height: 14px; margin: 0 2px; border: 1px solid #b4b8bc; }
```
